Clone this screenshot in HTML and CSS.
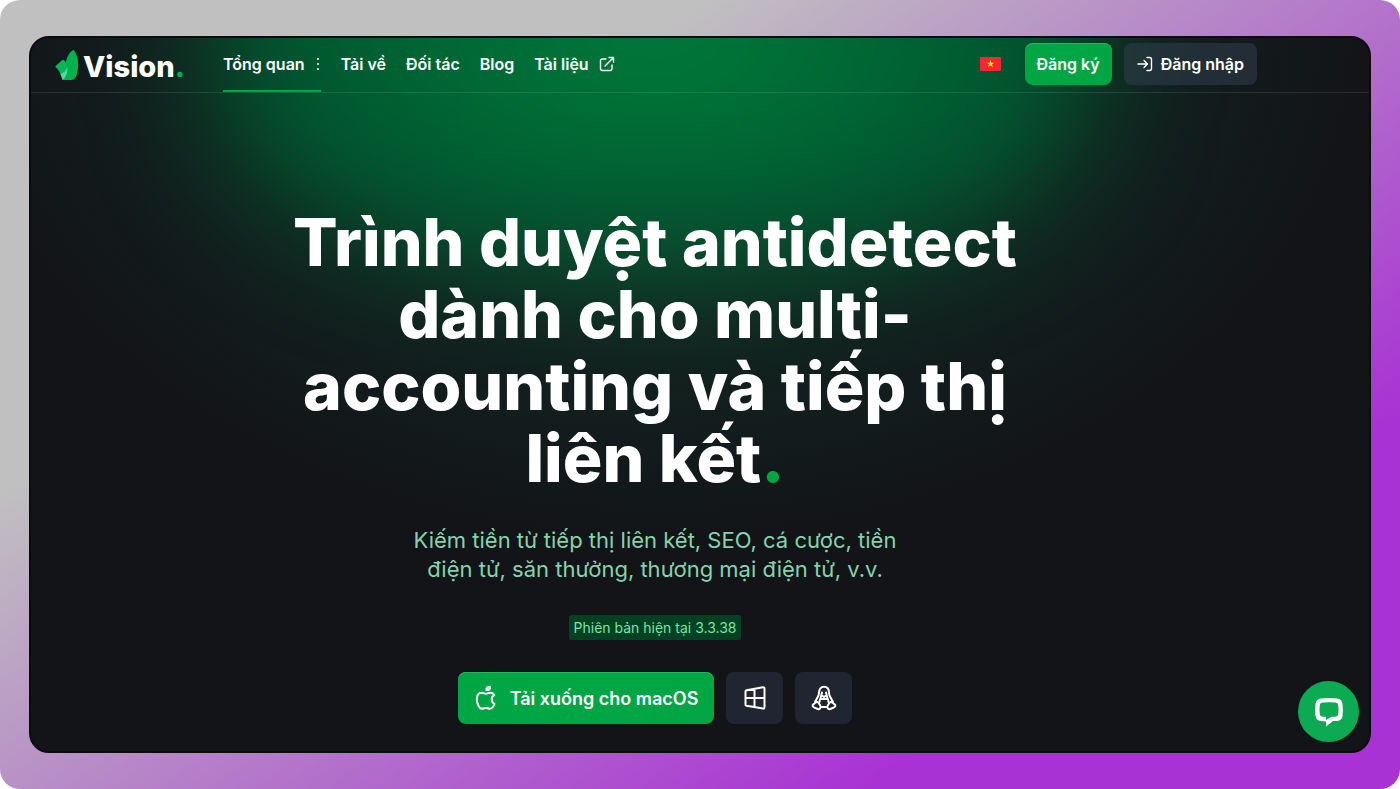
FILE: index.html
```html
<!DOCTYPE html>
<html lang="vi">
  <head>
    <meta charset="UTF-8" />
    <meta name="viewport" content="width=device-width, initial-scale=1.0" />
    <title>Vision</title>
    <link rel="stylesheet" href="styles.css">
  </head>
  <body>
    <div class="backdrop">
      <div class="window">
        <header class="header">
          <a class="logo" href="#">
            <svg width="24" height="32" viewBox="0 0 24 32">
              <path d="M17.500 1.200Q18.500 0.500 19.200 1.500C22.500 6.500 24.300 14 22.500 22.500C21.300 28 19.500 31 16.500 31H8L11 12.500C12 7 14.500 3.500 17.500 1.200Z" fill="#00b14c"/>
              <path d="M7 11.200Q8 10.300 8.800 11C11 13 12.800 17 12.500 21C12.300 25.500 10.500 29 7.500 31C6.500 26 4 21 0.800 18.500Q0.100 17.800 0.600 17Z" fill="#0db55a"/>
              <path d="M12.300 18C13 24 10.500 29 7.500 31L5.500 25C8.500 24 11 22 12.300 18Z" fill="#4fd899"/>
            </svg>
            <span>Vision<i>.</i></span>
          </a>
          <nav class="nav">
            <a class="active" href="#">Tổng quan
              <svg width="6" height="16" viewBox="0 0 6 16" fill="#fff"><circle cx="3" cy="3" r="1"/><circle cx="3" cy="8" r="1"/><circle cx="3" cy="13" r="1"/></svg>
            </a>
            <a href="#">Tải về</a>
            <a href="#">Đối tác</a>
            <a href="#">Blog</a>
            <a href="#">Tài liệu
              <svg width="16" height="16" viewBox="0 0 16 16" fill="none" stroke="#fff" stroke-width="1.4" stroke-linecap="round" stroke-linejoin="round"><path d="M7 3H3.500Q1.500 3 1.500 5V12.500Q1.500 14.500 3.500 14.500H11Q13 14.500 13 12.500V9M6 10L14.500 1.500M10 1.500H14.500V6"/></svg>
            </a>
          </nav>
          <div class="actions">
            <button class="lang" aria-label="Tiếng Việt">
              <svg width="21" height="14" viewBox="0 0 21 14"><rect width="21" height="14" rx="1" fill="#f9252f"/><path d="M10.500 3L11.400 5.800H14.300L12 7.500L12.900 10.300L10.500 8.600L8.100 10.300L9 7.500L6.700 5.800H9.600Z" fill="#ffea16"/></svg>
            </button>
            <a class="btn green" href="#">Đăng ký</a>
            <a class="btn dark" href="#">
              <svg width="16" height="16" viewBox="0 0 16 16" fill="none" stroke="#fff" stroke-width="1.4" stroke-linecap="round" stroke-linejoin="round"><path d="M1 8H10M7 4.500L10.500 8L7 11.500M10 1.500H12.500Q14.500 1.500 14.500 3.500V12.500Q14.500 14.500 12.500 14.500H10"/></svg>
              Đăng nhập
            </a>
          </div>
        </header>

        <main class="hero">
          <h1>Trình duyệt antidetect<br />dành cho multi-<br />accounting và tiếp thị<br />liên kết<span>.</span></h1>
          <p class="text">Kiếm tiền từ tiếp thị liên kết, SEO, cá cược, tiền<br />điện tử, săn thưởng, thương mại điện tử, v.v.</p>
          <span class="version">Phiên bản hiện tại 3.3.38</span>
          <div class="downloads">
            <a class="mac" href="#">
              <svg width="24" height="26" viewBox="0 0 24 26" fill="none" stroke="#fff" stroke-width="2" stroke-linejoin="round"><path d="M11.800 8.800C10.500 8.800 9.500 7.800 7.500 7.800C4.500 7.800 2.800 10.500 2.800 14C2.800 19 5.500 23.800 8 23.800C9.500 23.800 10.500 22.800 11.800 22.800C13.200 22.800 14.200 23.800 15.800 23.800C17.800 23.800 19.500 21.500 20.500 19C18.700 18 17.800 16.500 17.800 14.500C17.800 12.500 18.700 11 20.300 10.200C19.500 8.700 18 7.800 16.200 7.800C14.200 7.800 13.200 8.800 11.800 8.800Z"/><path d="M12.300 5C12.300 3 13.500 1.700 16 1.700C16.300 4 14.500 5.500 12.300 5Z"/></svg>
              Tải xuống cho macOS
            </a>
            <a class="os" href="#" aria-label="Windows">
              <svg width="24" height="26" viewBox="0 0 24 26" fill="none" stroke="#fff" stroke-width="2" stroke-linejoin="round"><path d="M3.500 5.200L20 2.200Q21.500 2 21.500 3.500V22Q21.500 23.700 20 23.500L3.500 20.700Q2.500 20.500 2.500 19.500V6.500Q2.500 5.400 3.500 5.200ZM2.500 13H21.500M11.500 4V22"/></svg>
            </a>
            <a class="os" href="#" aria-label="Linux">
              <svg width="26" height="26" viewBox="0 0 26 26" fill="none" stroke="#fff" stroke-width="2" stroke-linecap="round" stroke-linejoin="round"><path d="M4 17C5 14 8 12 8 8C8 4 10 1.800 13 1.800S18 4 18 8C18 12 21 14 22 17"/><path d="M11 7.500V8M15 7.500V8M11 10.500L13 12L15 10.500M10.500 9C10.500 12 8.500 14 8.500 17M15.500 9C15.500 12 17.500 14 17.500 17M10.500 22H15.500M10.500 14H15.500"/><path d="M4.700 17.500C6 16 7.500 17.500 9 20C10.500 22.500 9 24.800 6.800 24C4 23 1.200 22.500 1.600 20.500C1.800 19 3.500 19 4.700 17.500Z"/><path d="M21.300 17.500C20 16 18.500 17.500 17 20C15.500 22.500 17 24.800 19.200 24C22 23 24.800 22.500 24.400 20.500C24.200 19 22.500 19 21.300 17.500Z"/></svg>
            </a>
          </div>
        </main>

        <button class="chat" aria-label="Chat">
          <svg width="30" height="30" viewBox="0 0 30 30"><path d="M7 1.500Q15 0.500 23 1.500Q28 2 28.500 7Q29.300 13 28.500 19Q28 23.500 23 24H19L12 29.500V24.500L7 24Q2 23.500 1.500 19Q0.700 13 1.500 7Q2 2 7 1.500ZM8.500 5.500Q6 5.800 5.800 8Q5.200 12.500 5.800 17Q6 19.500 8.500 19.800H12V23L17.500 19.800H21.500Q24 19.500 24.200 17Q24.800 12.500 24.200 8Q24 5.800 21.500 5.500Q15 4.900 8.500 5.500Z" fill="#fff" fill-rule="evenodd"/></svg>
        </button>
      </div>
    </div>
  </body>
</html>
```
FILE: styles.css
```css
* {
  margin: 0;
  padding: 0;
  box-sizing: border-box;
}
body {
  background-color: white;
  font-family: Inter, "Noto Sans", sans-serif;
  color: white;
}
a {
  color: white;
  text-decoration: none;
}
button {
  border: none;
  background: none;
  cursor: pointer;
}
svg {
  flex-shrink: 0;
}
.backdrop {
  min-height: 100vh;
  padding: 36px 29px;
  border-radius: 20px;
  background: linear-gradient(145deg, #c0c0c0 28%, #a832d3 79%);
  display: flex;
}
.window {
  flex: 1;
  position: relative;
  z-index: 0;
  overflow: hidden;
  border: 2px solid #0b0c0e;
  border-radius: 20px;
  background: radial-gradient(ellipse 52% 70% at 47% 0, #12372a 40%, #12221f 65%, #131418) #131418;
}
/* green glow behind the header and the title */
.window::before {
  content: "";
  position: absolute;
  z-index: -1;
  top: -260px;
  left: 14%;
  width: 65%;
  height: 470px;
  border-radius: 0 0 35% 35%;
  background: radial-gradient(ellipse at 50% 54%, #007f3c, #00552f 65%);
  filter: blur(60px);
}
.header {
  height: 55px;
  padding: 0 112px 0 24px;
  border-bottom: 1px solid rgba(255, 255, 255, 0.1);
  display: flex;
  align-items: center;
}
.logo {
  display: flex;
  align-items: center;
  font-size: 29px;
  font-weight: 800;
  line-height: 32px;
  gap: 4px;
}
.logo span {
  padding-top: 4px;
}
.logo i {
  color: #00b14c;
  font-style: normal;
}
.nav {
  align-self: stretch;
  margin-left: 38px;
  display: flex;
  gap: 20px;
}
.nav a {
  display: flex;
  align-items: center;
  gap: 10px;
  font-size: 16px;
  font-weight: 600;
  border-bottom: 2px solid transparent;
}
.nav .active {
  border-color: #00a544;
}
.actions {
  margin-left: auto;
  padding-bottom: 2px;
  display: flex;
  align-items: center;
  gap: 12px;
}
.lang {
  display: flex;
  margin-right: 12px;
}
.btn {
  height: 42px;
  padding: 0 12px;
  border-radius: 8px;
  display: flex;
  align-items: center;
  gap: 8px;
  font-size: 16px;
  font-weight: 600;
}
.green {
  background-color: #00a544;
  box-shadow: inset 0 1px #29b462;
}
.dark {
  padding: 0 13px;
  background-color: rgba(51, 63, 82, 0.5);
}
.hero {
  padding: 113px 90px 26px 0;
  display: flex;
  flex-direction: column;
  align-items: center;
  text-align: center;
}
h1 {
  font-size: 66px;
  font-weight: 800;
  line-height: 72px;
}
h1 span {
  color: #00a544;
}
.text {
  margin-top: 32px;
  font-size: 22px;
  line-height: 29px;
  color: #86d3ab;
}
.version {
  margin-top: 31px;
  padding: 0 5px;
  border-radius: 2px;
  background-color: #004222;
  color: #7ee2a8;
  font-size: 14px;
  line-height: 25px;
}
.downloads {
  margin-top: 32px;
  display: flex;
  gap: 12px;
}
.mac,
.os {
  height: 52px;
  border-radius: 8px;
  display: flex;
  align-items: center;
  justify-content: center;
}
.mac {
  padding: 0 16px;
  gap: 12px;
  background-color: #00a544;
  box-shadow: inset 0 1px #29b462;
  font-size: 18px;
  font-weight: 600;
}
.os {
  width: 57px;
  background-color: #202531;
}
.chat {
  position: absolute;
  right: 10px;
  bottom: 9px;
  width: 61px;
  height: 61px;
  border-radius: 50%;
  background-color: #0cab53;
  display: flex;
  align-items: center;
  justify-content: center;
}
```
